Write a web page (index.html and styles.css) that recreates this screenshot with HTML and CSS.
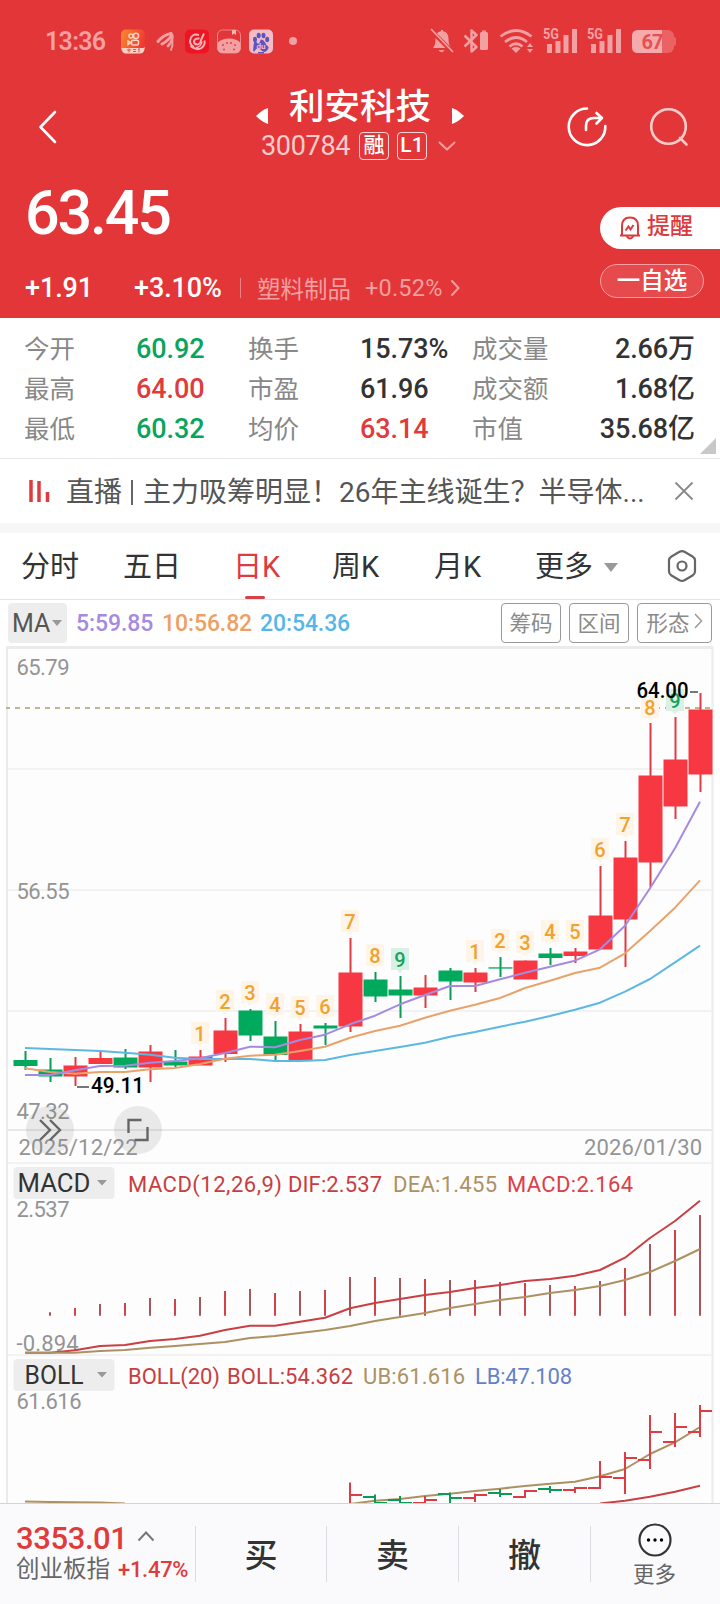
FILE: index.html
```
<!DOCTYPE html>
<html lang="zh-CN">
<head>
    <meta charset="UTF-8">
    <meta name="viewport" content="width=device-width, initial-scale=1.0">
    <title>利安科技 300784</title>
    <link rel="stylesheet" href="styles.css">
</head>

<body>
    <!-- 顶部红色区域 -->
    <header class="quote">
        <div class="status-bar">
            <span class="time">13:36</span>
            <svg class="apps" width="180" height="26" viewBox="120 28 180 26">
                <defs>
                    <linearGradient id="orange" x1="0" y1="0" x2="1" y2="0.4">
                        <stop offset="0" stop-color="#f98a2c"/>
                        <stop offset="1" stop-color="#ef3a34"/>
                    </linearGradient>
                </defs>
                <rect x="121" y="29.5" width="24" height="24" rx="5" fill="url(#orange)"/>
                <g fill="none" stroke="#fbd5c0" stroke-width="1.5">
                    <circle cx="131" cy="36" r="2"/>
                    <circle cx="136" cy="35.8" r="2.6"/>
                    <rect x="131.5" y="40.300" width="7" height="4.700" rx="1.5"/>
                    <path d="M131 42.500l-3-1.500v3.500z"/>
                </g>
                <path d="M121.500 48h22l1.500-1-1 4q-1 2.500-4 2.500h-14q-4 0-4.500-5.500z" fill="#fbd0c4"/>
                <path d="M127 50h4M129 48.500v4M133 49.500h3M133 51.500h3M138 49h2M139 49v3.500" stroke="#e5553f" stroke-width="1" fill="none"/>
                <g fill="none" stroke="#f2a0a2" stroke-linecap="round">
                    <path d="M158 41.500Q163 35 171 33.500" stroke-width="3"/>
                    <path d="M162 44Q168 41 172 35" stroke-width="3"/>
                    <path d="M168 46Q172 42 172.500 36.500" stroke-width="2.600"/>
                    <path d="M171 50Q173 46 172.500 40" stroke-width="1.800"/>
                </g>
                <rect x="185" y="29.500" width="24" height="24" rx="5" fill="#ee1424"/>
                <g fill="none" stroke="#f6b4b6" stroke-width="2">
                    <path d="M199 35q-8-2-9 6 0 4 4 6"/>
                    <path d="M199.500 38.500q-5-.5-5.500 3 0 3 3.500 3 3-.5 3.500-4.500L204 33.500"/>
                    <path d="M190.500 46q6 5 11 2 4-3 3-7.500"/>
                    <path d="M196 47.500q5 0 6-6" stroke-width="1.500"/>
                </g>
                <rect x="217.500" y="30" width="23" height="23" rx="5" fill="none" stroke="#ee8487" stroke-width="1"/>
                <path d="M217.500 43Q221 38.500 229 38.500T240.500 43V48q0 5-5 5h-13q-5 0-5-5z" fill="#f2a0a2"/>
                <path d="M232 30h4v5l-2-1.500-2 1.500z" fill="#f5b4b5"/>
                <g fill="#df4548"><circle cx="223" cy="45" r="1"/><circle cx="227" cy="43" r="1"/><circle cx="231" cy="43" r="1"/><circle cx="235" cy="45" r="1"/><circle cx="224" cy="49.500" r="1"/><circle cx="234" cy="49.500" r="1"/></g>
                <rect x="249" y="29.500" width="24" height="24" rx="5" fill="#f3bcc6"/>
                <g fill="#5b55c0">
                    <ellipse cx="255" cy="39.500" rx="2" ry="2.800"/>
                    <ellipse cx="258.700" cy="35.500" rx="2" ry="2.800"/>
                    <ellipse cx="263.500" cy="35.500" rx="2" ry="2.800"/>
                    <ellipse cx="267.200" cy="39.500" rx="2" ry="2.800"/>
                    <path d="M261 39.500q2.500 0 4 3t3 4-1 4-6-.5-6 .5-1.500-4.500 3-4 4.500-3z"/>
                    <path d="M258 52h6v1.500h-6z"/>
                </g>
                <text class="du" x="256.500" y="49">du</text>
                <circle cx="293" cy="41" r="4" fill="#f2a0a2"/>
            </svg>
            <svg class="system" width="250" height="28" viewBox="428 27 250 28">
                <g fill="#f2a0a2">
                    <!-- 静音 -->
                    <path d="M433 48q2.500-3 2.500-9 0-7 5.500-7.800V30h2v1.200q5.500.8 5.500 7.800 0 6 2.500 9zM438.500 50h6q-3 4.500-6 0z"/>
                    <path d="M430.500 30l22 22" stroke="#e33638" stroke-width="4.500"/>
                    <path d="M431 29l22 23" stroke="#f2a0a2" stroke-width="1.800"/>
                    <!-- 蓝牙 -->
                    <path d="M464.500 35.500l12 11.500-5 4.500v-21l5 4.500-12 11.500" fill="none" stroke="#f2a0a2" stroke-width="2.500" stroke-linejoin="round"/>
                    <rect x="480" y="32" width="8" height="18" rx="1.500"/>
                    <rect x="482" y="30.500" width="4" height="2"/>
                    <!-- WiFi -->
                    <g fill="none" stroke="#f2a0a2" stroke-width="2.800">
                        <path d="M500.500 36.500q15.500-12 31 0"/>
                        <path d="M505 42q11-9 22 0"/>
                        <path d="M509.500 46.500q6.500-5.500 13 0"/>
                    </g>
                    <path d="M511.500 48.500q4.500-3.500 9 0l-4.500 4.500z"/>
                    <path d="M527 47l3-4 3 4zM527 49h6l-3 4z"/>
                    <!-- 信号 -->
                    <rect x="547" y="44" width="5" height="9"/>
                    <rect x="555.500" y="41" width="5" height="12"/>
                    <rect x="563.500" y="35" width="5" height="18"/>
                    <rect x="572" y="29" width="5" height="24"/>
                    <rect x="591" y="44" width="5" height="9"/>
                    <rect x="599.500" y="41" width="5" height="12"/>
                    <rect x="607.500" y="35" width="5" height="18"/>
                    <rect x="616" y="29" width="5" height="24"/>
                    <text class="net" x="543" y="39" textLength="16" lengthAdjust="spacingAndGlyphs">5G</text>
                    <text class="net" x="587" y="39" textLength="16" lengthAdjust="spacingAndGlyphs">5G</text>
                    <!-- 电池 -->
                    <rect x="632" y="30" width="42" height="23" rx="6" fill="#eb6264"/>
                    <path d="M674 37q2 0 2 2v5q0 2-2 2z" fill="#eb6264"/>
                    <path d="M638 30h24v23h-24q-6 0-6-6V36q0-6 6-6z" fill="#f5abad"/>
                    <text class="battery" x="641.500" y="49" textLength="22">67</text>
                </g>
            </svg>
        </div>

        <nav class="title-bar">
            <svg class="back" width="20" height="34" viewBox="0 0 20 34"><path d="M17 2L2.500 17l14.500 15"/></svg>
            <div class="title">
                <div class="name">
                    <svg width="12" height="18" viewBox="0 0 12 18"><path d="M12 1v16q-6-2-12-8 6-6 12-8z"/></svg>
                    <h1>利安科技</h1>
                    <svg width="12" height="18" viewBox="0 0 12 18"><path d="M0 1v16q6-2 12-8-6-6-12-8z"/></svg>
                </div>
                <div class="code">
                    <span>300784</span><b>融</b><b>L1</b>
                    <svg width="18" height="10" viewBox="0 0 18 10"><path d="M1.500 1.500L9 8.500l7.500-7"/></svg>
                </div>
            </div>
            <svg class="tool share" width="42" height="42" viewBox="566 106 42 42">
                <path d="M587 108.500a18.300 18.300 0 1 0 18.300 17.500"/>
                <path d="M586 130v-4q0-8 8-8h7M596.500 113l5.500 5-5.500 5.500"/>
            </svg>
            <svg class="tool search" width="42" height="42" viewBox="648 106 42 42">
                <circle cx="668.500" cy="126.500" r="17.300"/>
                <path d="M680 138l6.500 6.500"/>
            </svg>
        </nav>

        <div class="price-row">
            <div class="price">63.45</div>
            <div class="remind">
                <svg width="24" height="26" viewBox="0 0 24 26">
                    <path d="M2 20.500h20M4 20V11q0-8.500 8-8.500t8 8.500v9M8.500 21q3.500 5 7 0"/>
                    <path d="M7.500 15.500l3-4 2 3 3-4.500"/>
                </svg>
                <span>提醒</span>
            </div>
        </div>

        <div class="change-row">
            <span class="diff">+1.91</span>
            <span class="rate">+3.10%</span>
            <span class="sector">塑料制品</span>
            <span class="sector-rate">+0.52%</span>
            <svg width="10" height="18" viewBox="0 0 10 18"><path d="M1.500 1.500L8.500 9l-7 7.500"/></svg>
            <button class="watch">一自选</button>
        </div>
    </header>

    <!-- 行情数据 -->
    <section class="stats">
        <span>今开</span><b class="green">60.92</b><span>换手</span><b>15.73%</b><span>成交量</span><b class="end">2.66万</b>
        <span>最高</span><b class="red">64.00</b><span>市盈</span><b>61.96</b><span>成交额</span><b class="end">1.68亿</b>
        <span>最低</span><b class="green">60.32</b><span>均价</span><b class="red">63.14</b><span>市值</span><b class="end">35.68亿</b>
        <i class="corner"></i>
    </section>

    <!-- 直播消息 -->
    <section class="news">
        <svg width="22" height="26" viewBox="0 0 22 26"><path d="M2 2v22M10 3v21M18.500 14v10"/></svg>
        <p>直播<i></i>主力吸筹明显！<em>26</em>年主线诞生？半导体<em>...</em></p>
        <svg class="close" width="20" height="20" viewBox="0 0 20 20"><path d="M1.500 1.500l17 17M18.500 1.500l-17 17"/></svg>
    </section>

    <!-- 周期切换 -->
    <nav class="tabs">
        <a>分时</a>
        <a>五日</a>
        <a class="active">日K</a>
        <a>周K</a>
        <a>月K</a>
        <a class="more">更多</a>
        <svg width="32" height="34" viewBox="0 0 32 34">
            <path d="M13.500 2.800q2.500-1.300 5 0l8 4.700q2.500 1.500 2.500 4v11q0 2.500-2.500 4l-8 4.700q-2.500 1.300-5 0l-8-4.700Q3 25 3 22.500v-11q0-2.500 2.500-4z"/>
            <circle cx="16" cy="17" r="4.500"/>
        </svg>
    </nav>

    <!-- 均线 -->
    <section class="ma">
        <span class="ma-pick">MA</span>
        <span class="ma5">5:59.85</span>
        <span class="ma10">10:56.82</span>
        <span class="ma20">20:54.36</span>
        <button class="first">筹码</button>
        <button>区间</button>
        <button class="wide">形态<svg width="9" height="18" viewBox="0 0 9 18"><path d="M1 2l6.500 7L1 16"/></svg></button>
    </section>

    <!-- K线 / MACD / BOLL -->
    <svg class="chart" width="720" height="857" viewBox="0 646 720 857">
        <rect class="area" x="7" y="647.500" width="705.500" height="870"/>
        <path class="frame" d="M6 647.500H713"/>
        <path class="grid" d="M8 769H712M8 890H712M8 1011H712M8 1163H712M8 1355H712"/>
        <path class="grid dark" d="M8 1130H712"/>
        <path class="last" d="M6 708H710"/>
        <g class="axis">
            <text x="16.500" y="674.500" textLength="53">65.79</text>
            <text x="16.500" y="898.700" textLength="53">56.55</text>
            <text x="16.500" y="1118.700" textLength="53">47.32</text>
            <text x="16.500" y="1217" textLength="53">2.537</text>
            <text x="16.500" y="1351" textLength="62">-0.894</text>
            <text x="16.500" y="1409" textLength="65">61.616</text>
            <text x="18.500" y="1155" textLength="119">2025/12/22</text>
            <text x="584" y="1155" textLength="118">2026/01/30</text>
        </g>
        <g id="kline"></g>
        <g id="macd"></g>
        <g id="boll"></g>
        <g class="extreme">
            <path d="M77 1087H89M690 692H698"/>
            <text x="91" y="1093" textLength="53" lengthAdjust="spacingAndGlyphs">49.11</text>
            <text x="636.500" y="698" textLength="52" lengthAdjust="spacingAndGlyphs">64.00</text>
        </g>
        <g class="float-btn">
            <circle cx="50" cy="1130" r="24"/>
            <circle cx="138" cy="1130" r="24"/>
            <path d="M40 1120l10 10-10 10M50 1120l10 10-10 10M128.500 1133v-13h13M147.500 1127v13h-13"/>
        </g>
        <g class="picker">
            <rect x="13.500" y="1167" width="101" height="32" rx="4"/>
            <rect x="13.500" y="1359" width="101" height="32" rx="4"/>
            <text x="17.500" y="1192" textLength="73" lengthAdjust="spacingAndGlyphs">MACD</text>
            <text x="24.500" y="1384" textLength="59" lengthAdjust="spacingAndGlyphs">BOLL</text>
            <path d="M97 1180h10l-5 5.500zM97 1372h10l-5 5.500z"/>
        </g>
        <g class="legend">
            <text class="dif" x="128" y="1192" textLength="154">MACD(12,26,9)</text>
            <text class="dif" x="288" y="1192" textLength="94">DIF:2.537</text>
            <text class="dea" x="393" y="1192" textLength="104">DEA:1.455</text>
            <text class="hist" x="507" y="1192" textLength="126">MACD:2.164</text>
            <text class="dif" x="128" y="1384" textLength="92">BOLL(20)</text>
            <text class="dif" x="227" y="1384" textLength="126">BOLL:54.362</text>
            <text class="dea" x="363" y="1384" textLength="102">UB:61.616</text>
            <text class="lb" x="475" y="1384" textLength="97">LB:47.108</text>
        </g>
    </svg>

    <!-- 底部交易栏 -->
    <footer class="trade">
        <div class="index">
            <div class="index-value">3353.01
                <svg width="18" height="12" viewBox="0 0 18 12"><path d="M1.500 10.500L9 2.500l7.500 8"/></svg>
            </div>
            <div class="index-name">创业板指<b>+1.47%</b></div>
        </div>
        <a>买</a>
        <a>卖</a>
        <a>撤</a>
        <div class="menu">
            <svg width="36" height="36" viewBox="0 0 36 36">
                <circle class="ring" cx="18" cy="18" r="15.500"/>
                <circle cx="11.500" cy="18" r="1.700"/><circle cx="18" cy="18" r="1.700"/><circle cx="24.500" cy="18" r="1.700"/>
            </svg>
            <span>更多</span>
        </div>
    </footer>

    <script src="chart.js"></script>
</body>
</html>
```
FILE: styles.css
```
/* General */
* {
    box-sizing: border-box;
}

body {
    margin: 0;
    width: 720px;
    height: 1604px;
    overflow: hidden;
    background: #fff;
    color: #333;
    font-family: Roboto, "Noto Sans CJK SC", sans-serif;
}

svg {
    display: block;
    flex: none;
}

button {
    font-family: inherit;
    padding: 0;
}

b,
i,
em {
    font-style: normal;
    font-weight: 400;
}

.red {
    color: #e13a3a;
}

.green {
    color: #0aa55c;
}

/* 顶部 */
.quote {
    height: 318px;
    background: #e33638;
    color: #fff;
}

.status-bar {
    display: flex;
    align-items: center;
    height: 82px;
    padding-left: 45px;
}

.time {
    width: 75px;
    font-size: 25px;
    font-weight: 600;
    letter-spacing: -0.7px;
    color: #f2a0a2;
}

.system {
    margin-left: 128px;
}

.du {
    font-size: 8px;
    font-weight: 700;
    fill: #f3bcc6;
}

.net {
    font-size: 15px;
    font-weight: 700;
}

.battery {
    font-size: 20px;
    font-weight: 700;
    fill: #e65053;
}

.title-bar {
    display: flex;
    align-items: center;
    height: 90px;
    padding-left: 38px;
}

.title-bar path,
.title-bar circle {
    fill: none;
    stroke: #fff;
    stroke-width: 2.6;
    stroke-linecap: round;
    stroke-linejoin: round;
}

.title-bar .name path {
    fill: #fff;
    stroke: none;
}

.title {
    width: 208px;
    height: 86px;
    margin-left: 198px;
}

.name {
    display: flex;
    align-items: center;
    justify-content: space-between;
    height: 46px;
}

.name svg {
    margin-top: 18px;
}

.name h1 {
    margin: 0;
    font-size: 35.5px;
    font-weight: 500;
    line-height: 46px;
}

.code {
    display: flex;
    align-items: center;
    height: 32px;
    padding-left: 5px;
    font-size: 27px;
    color: #f9cccc;
}

.code span {
    width: 98px;
    letter-spacing: -0.3px;
}

.code b {
    width: 30px;
    height: 28px;
    margin-right: 8px;
    border: 1px solid #fbd5d5;
    border-radius: 4px;
    color: #fff;
    font-size: 21px;
    font-weight: 500;
    line-height: 25px;
    text-align: center;
}

.code svg {
    margin-left: 3px;
}

.code svg path {
    stroke: #f2a0a2;
    stroke-width: 2;
}

.share {
    margin-left: 102px;
}

.search {
    margin-left: 40px;
}

.title-bar .search path,
.title-bar .search circle {
    stroke: #f9cccc;
}

.price-row {
    display: flex;
    justify-content: space-between;
    height: 86px;
    padding-left: 25px;
}

.price {
    font-size: 61px;
    font-weight: 500;
    letter-spacing: -2.2px;
    line-height: 83px;
}

.remind {
    display: flex;
    align-items: center;
    gap: 5px;
    width: 120px;
    height: 42px;
    margin-top: 35px;
    padding: 0 0 1px 18px;
    border-radius: 21px 0 0 21px;
    background: #fff;
    color: #dc3a3c;
    font-size: 23px;
    font-weight: 500;
    line-height: 38px;
}

.remind span {
    margin-top: -2px;
}

.remind path {
    fill: none;
    stroke: #dc3a3c;
    stroke-width: 2;
}

.change-row {
    display: flex;
    align-items: center;
    height: 60px;
    padding-left: 25px;
    font-size: 27px;
    font-weight: 500;
}

.diff {
    width: 109px;
    letter-spacing: -0.1px;
}

.rate {
    width: 107px;
    height: 20px;
    border-right: 1px solid #ee8183;
    letter-spacing: -0.1px;
    line-height: 21px;
}

.sector,
.sector-rate {
    font-size: 23.5px;
    font-weight: 400;
    color: #f39ea0;
}

.sector {
    margin-left: 16px;
}

.sector-rate {
    width: 85px;
    margin-left: 14px;
    letter-spacing: 0.2px;
}

.change-row path {
    fill: none;
    stroke: #f39ea0;
    stroke-width: 2;
}

.watch {
    width: 104px;
    height: 34px;
    margin: -14px 0 0 140px;
    border: 1px solid #f3a0a2;
    border-radius: 17px;
    background: #e74a4c;
    color: #fff;
    font-size: 23.5px;
    font-weight: 500;
    line-height: 32px;
}

/* 行情数据 */
.stats {
    position: relative;
    display: grid;
    grid-template-columns: 112px 112px 112px 112px 88px 1fr;
    grid-auto-rows: 40px;
    height: 141px;
    padding: 11px 25px 0 24px;
    border-bottom: 1px solid #e8e8e8;
    font-size: 26px;
    line-height: 40px;
}

.stats span {
    font-size: 25.5px;
    color: #888;
}

.stats b {
    white-space: nowrap;
    font-size: 27px;
    font-weight: 500;
    letter-spacing: -0.1px;
}

.stats .end {
    text-align: right;
}

.corner {
    position: absolute;
    right: 4px;
    bottom: 4px;
    border-bottom: 16px solid #c8c8c8;
    border-left: 16px solid transparent;
}

/* 直播消息 */
.news {
    display: flex;
    align-items: center;
    height: 74px;
    padding-left: 29px;
    border-bottom: 10px solid #f7f7f7;
    font-size: 28px;
    color: #555;
}

.news p {
    width: 591px;
    margin: -2px 17px 0 15px;
    white-space: nowrap;
}

.news p i {
    display: inline-block;
    width: 2px;
    height: 25px;
    margin: 0 10px 0 9px;
    vertical-align: -3px;
    background: #666;
}

.news path {
    fill: none;
    stroke: #dd3b40;
    stroke-width: 3.5;
}

.news .close path {
    stroke: #888;
    stroke-width: 1.8;
}

/* 周期切换 */
.tabs {
    display: grid;
    grid-template-columns: 102px 110px 99px 102px 101px 130px 32px;
    align-items: center;
    height: 67px;
    padding-left: 22px;
    border-bottom: 1px solid #e6e6e6;
    font-size: 29px;
    color: #333;
}

.tabs a {
    height: 66px;
    margin-left: -1px;
    line-height: 68px;
}

.tabs .active {
    position: relative;
    color: #dd3b40;
}

.tabs .active::after {
    content: "";
    position: absolute;
    left: 12px;
    bottom: 0;
    width: 20px;
    height: 3px;
    border-radius: 2px;
    background: #d5434a;
}

.more::after {
    content: "";
    display: inline-block;
    margin-left: 11px;
    vertical-align: 5px;
    border-top: 9px solid #999;
    border-left: 7.5px solid transparent;
    border-right: 7.5px solid transparent;
}

.tabs path,
.tabs circle {
    fill: none;
    stroke: #666;
    stroke-width: 2.2;
}

/* 均线 */
.ma {
    display: flex;
    align-items: center;
    height: 46px;
    padding: 0 0 1px 8px;
    font-size: 23px;
    font-weight: 500;
}

.ma-pick {
    width: 59px;
    height: 40px;
    margin-right: 9px;
    padding-left: 4px;
    border-radius: 4px;
    background: #ededed;
    color: #555;
    font-size: 25px;
    font-weight: 400;
    line-height: 41px;
}

.ma-pick::after {
    content: "";
    display: inline-block;
    margin-left: 2px;
    vertical-align: 6px;
    border-top: 6px solid #999;
    border-left: 5px solid transparent;
    border-right: 5px solid transparent;
}

.ma5,
.ma10,
.ma20 {
    padding-top: 2px;
    letter-spacing: -0.1px;
}

.ma5 {
    width: 86px;
    color: #a58be0;
}

.ma10 {
    width: 98px;
    color: #ee9f63;
}

.ma20 {
    color: #56b7e6;
}

.ma button {
    display: flex;
    align-items: center;
    justify-content: center;
    gap: 4px;
    width: 60px;
    height: 40px;
    margin-left: 8px;
    padding-bottom: 3px;
    border: 1px solid #999;
    border-radius: 4px;
    background: #fff;
    color: #8a8a8a;
    font-size: 21.5px;
}

.ma .first {
    margin-left: auto;
}

.ma .wide {
    width: 75px;
    margin-right: 8px;
}

.ma button path {
    fill: none;
    stroke: #999;
    stroke-width: 1.5;
}

/* 图表 */
.chart text {
    font-size: 22px;
}

.area {
    fill: #fdfdfd;
    stroke: #ebebeb;
    stroke-width: 2;
}

.frame {
    stroke: #ebebeb;
    stroke-width: 3;
}

.grid {
    stroke: #f2f2f2;
    stroke-width: 2;
}

.grid.dark {
    stroke: #e8e8e8;
}

.last {
    stroke: #c4b48b;
    stroke-width: 2;
    stroke-dasharray: 5 5;
    stroke-dashoffset: 1;
}

.axis text {
    fill: #949494;
}

.up {
    fill: #f73842;
    stroke: #e03a42;
}

.down {
    fill: #00a95c;
    stroke: #0c9a58;
}

.chart .up,
.chart .down {
    stroke-width: 2;
}

.chart rect.up,
.chart rect.down {
    stroke: none;
}

.line {
    fill: none;
    stroke-width: 2;
    stroke-linejoin: round;
}

.line.purple {
    stroke: #a58be0;
}

.line.orange {
    stroke: #eba269;
}

.line.blue {
    stroke: #5bb8e3;
}

.line.crimson {
    stroke: #c93f43;
}

.line.gold {
    stroke: #ad9163;
}

.bar {
    stroke: #d0434a;
    stroke-width: 2;
}

.bar.dim {
    stroke: #a8555b;
}

.tag {
    fill: #fef4e8;
}

.tag.nine {
    fill: #d9f1e4;
}

.chart .tag-text {
    font-size: 20px;
    font-weight: 500;
    text-anchor: middle;
    fill: #f0a22e;
}

.chart .tag-text.nine {
    fill: #12a35d;
}

.extreme text {
    font-weight: 500;
    fill: #000;
}

.extreme path {
    stroke: #777;
    stroke-width: 2;
}

.float-btn circle {
    fill: rgba(120, 120, 120, 0.15);
}

.float-btn path {
    fill: none;
    stroke: #666;
    stroke-width: 2.4;
}

.picker rect {
    fill: #ededed;
}

.chart .picker text {
    font-size: 25.5px;
    fill: #333;
}

.picker path {
    fill: #999;
}

.dif {
    fill: #c83d40;
}

.dea {
    fill: #ad9163;
}

.hist {
    fill: #dc3f48;
}

.lb {
    fill: #6580cc;
}

/* 底部交易栏 */
.trade {
    display: grid;
    grid-template-columns: 196px 131px 132px 132px 1fr;
    align-items: center;
    height: 101px;
    border-top: 1px solid #d4d4d8;
    background: #fafafc;
}

.index,
.trade a {
    height: 56px;
    border-right: 1px solid #dcdce0;
}

.index {
    padding-left: 16px;
    white-space: nowrap;
}

.index-value {
    display: flex;
    align-items: center;
    gap: 9px;
    margin-top: -5px;
    height: 34px;
    font-size: 31px;
    font-weight: 500;
    letter-spacing: -0.4px;
    color: #e13a3a;
}

.index-value svg {
    margin-top: -4px;
}

.index-name {
    font-size: 23.5px;
    line-height: 28px;
    color: #666;
}

.index-name b {
    margin-left: 8px;
    font-size: 22px;
    font-weight: 500;
    letter-spacing: -0.3px;
    color: #e13a3a;
}

.trade path {
    fill: none;
    stroke: #777;
    stroke-width: 2;
}

.trade a {
    font-size: 33px;
    font-weight: 500;
    line-height: 59px;
    text-align: center;
}

.menu {
    display: flex;
    flex-direction: column;
    align-items: center;
    padding-right: 2px;
    font-size: 21.5px;
    line-height: 34px;
    color: #666;
}

.menu svg {
    margin-top: 5px;
}

.menu .ring {
    fill: none;
    stroke: #333;
    stroke-width: 2.2;
}
```
FILE: chart.js
```
const STEP = 25;
const x = i => 25 + i * STEP;

// 最高, 实体上沿, 实体下沿, 最低
const candles = [
    ['down', 1051, 1060, 1066, 1070], ['down', 1058, 1069.5, 1076.5, 1082],
    ['up', 1057, 1065.5, 1076.5, 1086], ['up', 1052, 1058, 1064, 1064],
    ['down', 1049, 1057.5, 1067.5, 1069], ['up', 1045, 1051.5, 1067.5, 1082],
    ['down', 1050, 1061.5, 1065.5, 1067], ['up', 1050, 1056.5, 1065.5, 1065],
    ['up', 1018, 1030.5, 1054, 1062], ['down', 1009, 1010.5, 1035.5, 1041],
    ['down', 1021, 1036.5, 1055, 1060], ['up', 1024, 1031.5, 1060.5, 1060],
    ['down', 1023, 1025.5, 1028.5, 1045], ['up', 938, 972.5, 1026.5, 1032],
    ['down', 972, 979.5, 996.5, 1002], ['down', 976, 989.5, 995.5, 1018],
    ['up', 975, 987.5, 995.5, 1008], ['down', 968, 970.5, 981.5, 1000],
    ['up', 968, 972.5, 982.5, 992], ['down', 957, 967.3, 968.6, 977],
    ['up', 960.5, 960.5, 979.5, 979], ['down', 948, 953.5, 958, 965],
    ['up', 948, 951.5, 956, 963], ['up', 866, 915.5, 949.5, 949],
    ['up', 841, 857.5, 919.5, 967], ['up', 723, 775.5, 862.5, 887],
    ['up', 717, 759.5, 806.5, 819], ['up', 693, 709.5, 774.5, 792]
];

// 九转序列: 位置, 数字, 标签顶部
const tags = [
    [7, 1, 1022], [8, 2, 990], [9, 3, 981], [10, 4, 993], [11, 5, 996], [12, 6, 995],
    [13, 7, 910], [14, 8, 944], [15, 9, 948], [18, 1, 940], [19, 2, 929], [20, 3, 931],
    [21, 4, 920], [22, 5, 920], [23, 6, 838], [24, 7, 813], [25, 8, 696], [26, 9, 689]
];

const ma5 = [1075, 1075, 1070.3, 1066, 1065.7, 1062.7, 1061, 1058.3, 1053, 1046.7, 1047.3, 1040, 1034.7, 1024.3, 1015.7, 1004.3, 995, 986, 986, 979.3, 972.7, 966.7, 960.7, 949.3, 925.7, 888.3, 848.3, 801.7];
const ma10 = [1068.3, 1072, 1073.7, 1072, 1072, 1069.3, 1068, 1064, 1058.7, 1055.7, 1054.7, 1051, 1046.7, 1037.7, 1031, 1025.7, 1017.7, 1010.7, 1004.7, 998, 988, 980.7, 973, 967.7, 953.3, 931, 907.7, 880.3];
const ma20 = [1048, 1049, 1050, 1051, 1052.7, 1054.7, 1057.7, 1059, 1059, 1059, 1061, 1061, 1060, 1055, 1051, 1047, 1042.7, 1036.7, 1032, 1026.7, 1021.7, 1016, 1009.7, 1002.7, 991.7, 979, 962.3, 945.7];

const hist = [1312.3, 1308, 1304, 1303, 1298, 1299, 1297, 1291, 1289, 1293, 1291, 1290, 1277, 1277, 1278, 1279, 1280, 1280, 1282, 1283, 1285, 1286, 1281, 1268, 1244, 1230, 1215];
const dif = [1352.7, 1352.7, 1350.3, 1346, 1345, 1341, 1339, 1335.7, 1330, 1325.7, 1325.7, 1321.7, 1317.7, 1308.3, 1303, 1299, 1295, 1292, 1288, 1285, 1281, 1279, 1275.7, 1270, 1257.7, 1238, 1221, 1200.7];
const dea = [1352.7, 1352.7, 1352.7, 1351, 1350, 1347.7, 1346, 1344, 1342, 1338, 1336, 1333, 1330, 1326, 1321, 1317, 1313, 1308, 1304, 1300, 1297, 1293, 1290, 1286, 1280, 1272, 1261, 1249];

// BOLL 美国线: 位置, 方向, 最高, 最低, 开, 收
const ohlc = [
    [13, 'up', 1482.5, 1510, 1510, 1495], [14, 'down', 1494.5, 1510, 1497, 1503],
    [15, 'down', 1496, 1510, 1500, 1503], [16, 'up', 1496, 1510, 1503, 1500],
    [17, 'down', 1492.5, 1510, 1494, 1498], [18, 'up', 1493.5, 1502, 1498, 1495],
    [19, 'down', 1489, 1497, 1493, 1494], [20, 'up', 1490, 1498, 1497, 1491],
    [21, 'down', 1486, 1493, 1489, 1490], [22, 'up', 1487, 1493, 1490, 1488],
    [23, 'up', 1461, 1489, 1488, 1477], [24, 'up', 1452, 1494, 1478, 1458],
    [25, 'up', 1415, 1469, 1460, 1432], [26, 'up', 1413, 1447, 1442, 1427],
    [27, 'up', 1405, 1437, 1432, 1411]
];
const upper = [1504, 1500.7, 1499, 1496, 1493.7, 1491, 1488.7, 1486, 1483.7, 1481.7, 1476.3, 1469, 1454, 1442.3, 1427];
const middle = [1503.5, 1500.7, 1496.7, 1491.7, 1485.7];

function line(color, values, from = 0) {
    const points = values.map((y, i) => `${x(from + i)},${y}`).join(' ');
    return `<polyline class="line ${color}" points="${points}"/>`;
}

function drawKline() {
    let html = '';
    tags.forEach(([i, n, top]) => {
        const cls = n === 9 ? ' nine' : '';
        html += `<path class="tag${cls}" d="M${x(i) - 9} ${top}h18v22h-6l-3 3-3-3h-6z"/>`;
        html += `<text class="tag-text${cls}" x="${x(i)}" y="${top + 18.5}">${n}</text>`;
    });
    candles.forEach(([dir, high, top, bottom, low], i) => {
        html += `<path class="${dir}" d="M${x(i) + 0.5} ${high}V${low}"/>`;
        html += `<rect class="${dir}" x="${x(i) - 11.5}" y="${top}" width="24" height="${bottom - top}"/>`;
    });
    html += line('blue', ma20) + line('orange', ma10) + line('purple', ma5);
    document.getElementById('kline').innerHTML = html;
}

function drawMacd() {
    let html = '';
    hist.forEach((y, i) => {
        html += `<path class="bar${i % 2 ? '' : ' dim'}" d="M${x(i + 1)} ${y}V1315.7"/>`;
    });
    html += line('crimson', dif) + line('gold', dea);
    document.getElementById('macd').innerHTML = html;
}

function drawBoll() {
    let html = line('gold', [1501.5, 1502, 1502.3, 1502.6, 1503.5]);
    html += line('gold', upper, 13) + line('crimson', middle, 23);
    ohlc.forEach(([i, dir, high, low, open, close]) => {
        html += `<path class="${dir}" d="M${x(i)} ${high}V${low}M${x(i) - 12} ${open}H${x(i)}M${x(i)} ${close}H${x(i) + 12}"/>`;
    });
    document.getElementById('boll').innerHTML = html;
}

drawKline();
drawMacd();
drawBoll();
```
